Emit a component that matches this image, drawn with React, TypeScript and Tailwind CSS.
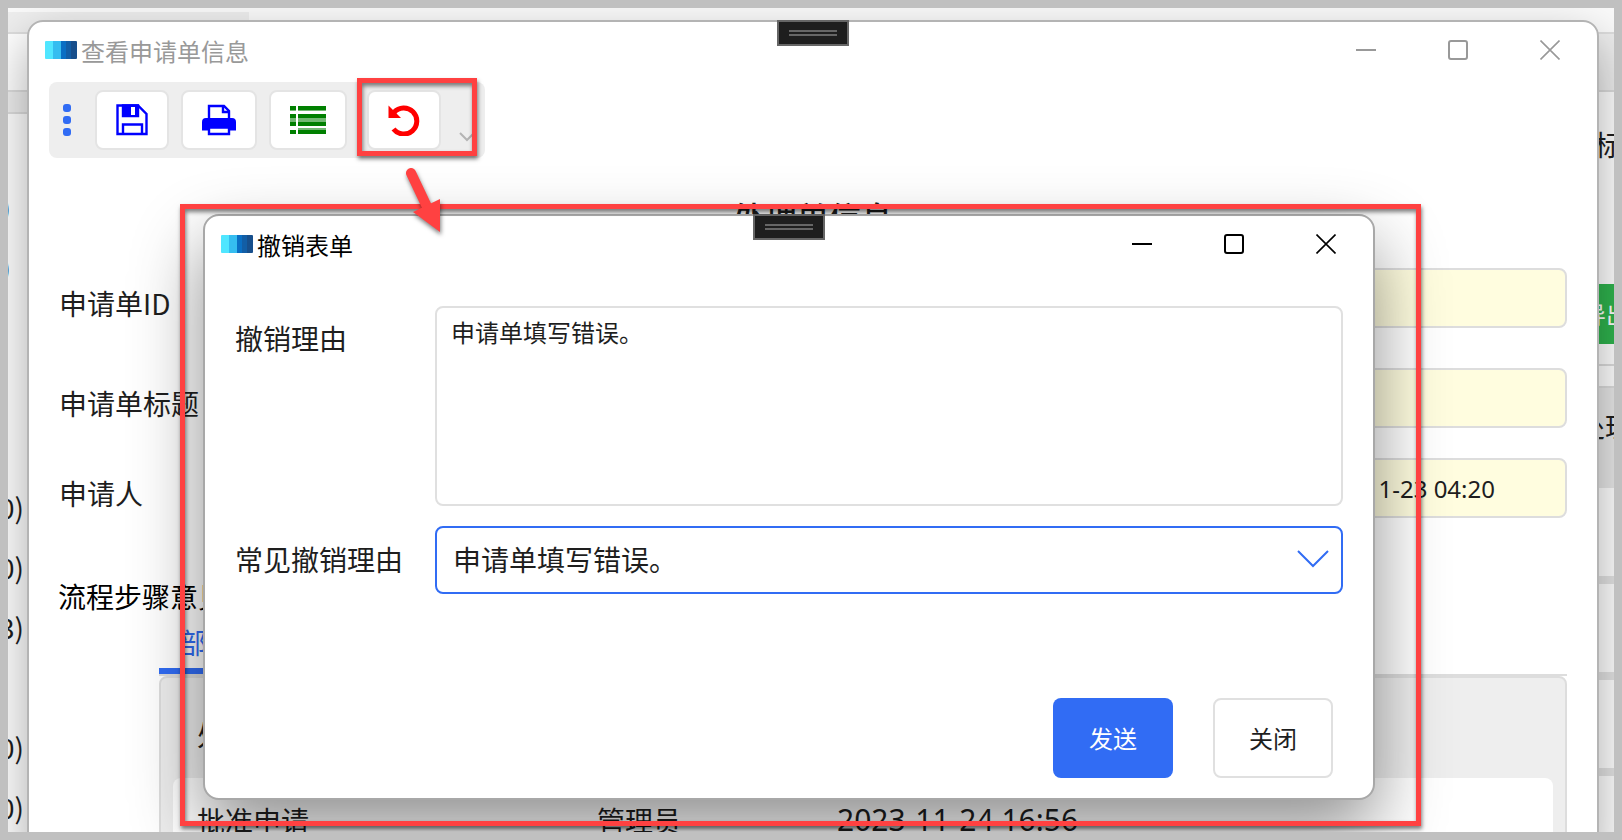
import React, { useState } from 'react'

const REASON = '申请单填写错误。'

const Logo: React.FC = () => (
  <svg width="32" height="18" viewBox="0 0 32 18" aria-hidden="true">
    <rect width="9" height="18" rx="1" fill="#50e6ff" />
    <rect x="8" width="8" height="18" fill="#35bdf0" />
    <rect x="16" width="8" height="18" fill="#0a6fc4" />
    <rect x="23" width="9" height="18" rx="1" fill="#174f8c" />
    <rect x="21" width="5" height="18" fill="#125ea6" />
  </svg>
)

const SaveIcon: React.FC = () => (
  <svg width="32" height="32" viewBox="0 0 32 32" fill="none" stroke="#0000ff" strokeWidth="2.4">
    <path d="M1.500 1.500h20.500l8.500 8.500v20h-29z" />
    <path d="M7 30V20.500h19V30" />
    <path d="M7 1.500h15v10.500H7z" fill="#0000ff" />
    <path d="M15 3h4v8h-4z" fill="#fff" stroke="none" />
  </svg>
)

const PrintIcon: React.FC = () => (
  <svg width="34" height="32" viewBox="0 0 34 32">
    <path d="M7 15V2h15l5 5v8" fill="#fff" stroke="#0000ff" strokeWidth="2.4" />
    <path d="M21 2v6h6" fill="none" stroke="#0000ff" strokeWidth="2.4" />
    <path d="M4 14h26a4 4 0 0 1 4 4v8.500h-6V23H6v3.500H0V18a4 4 0 0 1 4-4z" fill="#0000ff" />
    <path d="M7 23.500h20V30H7z" fill="#fff" stroke="#0000ff" strokeWidth="2.4" />
  </svg>
)

const ListIcon: React.FC = () => (
  <svg width="36" height="32" viewBox="0 0 36 32">
    {[2, 10, 18, 26].map((y) => (
      <g key={y} fill="#008000">
        <rect x="0" y={y} width="6" height="4" />
        <rect x="8" y={y} width="28" height="4" />
      </g>
    ))}
    <path d="M0 6h6v1H0zM8 6h28v1H8zM0 14h6v4H0zM8 14h28v4H8zM8 24h28v2H8z" fill="#008000" opacity="0.55" />
  </svg>
)

const UndoIcon: React.FC = () => (
  <svg width="32" height="32" viewBox="0 0 32 32">
    <path d="M6 8.500A13 13 0 1 1 5.500 25" fill="none" stroke="#ff0000" strokeWidth="5" />
    <path d="M0.500 1.500v12.500h12.500z" fill="#ff0000" />
  </svg>
)

const Grip: React.FC = () => (
  <div className="absolute -top-[2px] flex h-[26px] w-[72px] flex-col items-center justify-center gap-[2px] border-2 border-[#666] bg-[#1e1e1e]">
    <span className="h-[2px] w-12 bg-[#666]" />
    <span className="h-[2px] w-12 bg-[#666]" />
  </div>
)

interface TitleBarProps {
  title: string
  color: string
}

const TitleBar: React.FC<TitleBarProps> = ({ title, color }) => (
  <header className={`flex h-14 items-center pr-px pl-4 ${color}`}>
    <Logo />
    <h1 className="ml-1 flex-1 pt-[2px] text-[24px] leading-8">{title}</h1>
    <button aria-label="最小化" className="flex h-14 w-[92px] items-center justify-center">
      <svg width="20" height="20" stroke="currentColor" strokeWidth="2">
        <path d="M0 10h20" />
      </svg>
    </button>
    <button aria-label="最大化" className="flex h-14 w-[92px] items-center justify-center">
      <svg width="20" height="20" fill="none" stroke="currentColor" strokeWidth="2">
        <rect x="1" y="1" width="18" height="18" rx="2" />
      </svg>
    </button>
    <button aria-label="关闭窗口" className="flex h-14 w-[92px] items-center justify-center">
      <svg width="20" height="20" stroke="currentColor" strokeWidth="1.6">
        <path d="M0.500 0.500l19 19M19.500 0.500l-19 19" />
      </svg>
    </button>
  </header>
)

interface ToolButtonProps {
  label: string
  children: React.ReactNode
}

const ToolButton: React.FC<ToolButtonProps> = ({ label, children }) => (
  <button
    aria-label={label}
    className="flex h-[60px] items-center justify-center rounded-lg border-2 border-[#e4e4e4] bg-white px-[19px]"
  >
    {children}
  </button>
)

const Toolbar: React.FC = () => (
  <div className="relative mt-1 ml-5 flex h-[76px] w-fit items-center gap-3 rounded-lg bg-[#eee] pr-11 pl-[14px]">
    <div className="mr-3 flex flex-col gap-1">
      <span className="size-2 rounded-[3px] bg-[#316cf4]" />
      <span className="size-2 rounded-[3px] bg-[#316cf4]" />
      <span className="size-2 rounded-[3px] bg-[#316cf4]" />
    </div>
    <ToolButton label="保存">
      <SaveIcon />
    </ToolButton>
    <ToolButton label="打印">
      <PrintIcon />
    </ToolButton>
    <ToolButton label="列表">
      <ListIcon />
    </ToolButton>
    <div className="ml-2">
      <ToolButton label="撤销">
        <UndoIcon />
      </ToolButton>
    </div>
    <svg
      className="absolute right-[10px] bottom-4"
      width="16"
      height="10"
      fill="none"
      stroke="#b4b4b4"
      strokeWidth="2"
    >
      <path d="M1 1l7 7 7-7" />
    </svg>
    <div className="absolute -top-1 right-2 h-[78px] w-[120px] border-5 border-[#ff4141] shadow-[1px_3px_4px_rgba(0,0,0,0.5),inset_1px_3px_4px_rgba(0,0,0,0.5)]" />
  </div>
)

interface FieldProps {
  id: string
  label: string
  value?: string
}

const Field: React.FC<FieldProps> = ({ id, label, value = '' }) => (
  <div className="flex items-center pr-[30px] pl-[30px]">
    <label htmlFor={id} className="w-[200px] pt-[10px] text-[28px] leading-8 whitespace-nowrap">
      {label}
    </label>
    <input
      id={id}
      readOnly
      value={value}
      className="h-[60px] min-w-0 flex-1 rounded-lg border-2 border-[#ddd] bg-[#fffddf] pr-[70px] text-right font-['Noto_Sans','Noto_Sans_CJK_SC',sans-serif] text-[24px]"
    />
  </div>
)

const RequestWindow: React.FC = () => (
  <main className="absolute top-3 right-[15px] -bottom-6 left-[19px] overflow-hidden rounded-[16px] border-2 border-[#b4b4b4] bg-white">
    <TitleBar title="查看申请单信息" color="text-[#999]" />
    <Toolbar />
    <h2 className="mt-[38px] text-center text-[32px] leading-10 font-medium">处理单信息</h2>
    <div className="mt-8 flex flex-col">
      <Field id="request-id" label="申请单ID" />
      <div className="mt-10">
        <Field id="request-title" label="申请单标题" />
      </div>
      <div className="mt-[30px]">
        <Field id="applicant" label="申请人" value="2023-11-23 04:20" />
      </div>
    </div>
    <h3 className="mt-[58px] ml-[29px] text-[28px] leading-10 text-black">流程步骤意见</h3>
    <section className="mr-[30px] ml-[130px]">
      <div className="flex border-b-2 border-[#ddd]">
        <button className="h-[58px] border-b-6 border-[#316cf4] px-5 text-[28px] text-[#316cf4]">
          部门
        </button>
      </div>
      <div className="rounded-lg border-2 border-[#ddd] bg-[#eee] px-3">
        <table className="w-full table-fixed border-separate border-spacing-0 text-left text-[28px] leading-8">
          <thead>
            <tr className="h-[100px]">
              <th className="w-[400px] pt-3 pl-6 font-normal">处理步骤</th>
              <th className="w-[240px]" />
              <th />
            </tr>
          </thead>
          <tbody>
            <tr className="h-[84px]">
              <td className="rounded-l-lg bg-white pl-6">批准申请</td>
              <td className="bg-white pl-6">管理员</td>
              <td className="rounded-r-lg bg-white pl-6 font-['Noto_Sans',sans-serif] text-[30px]">
                2023-11-24 16:56
              </td>
            </tr>
          </tbody>
        </table>
      </div>
    </section>
  </main>
)

const RevokeDialog: React.FC = () => {
  const [reason, setReason] = useState(REASON)

  return (
    <div
      role="dialog"
      aria-label="撤销表单"
      className="absolute top-[206px] right-[239px] left-[195px] rounded-[16px] border-2 border-[#a8a8a8] bg-white bg-clip-padding shadow-[0_30px_70px_rgba(0,0,0,0.44)]"
    >
      <div className="flex justify-center">
        <Grip />
      </div>
      <TitleBar title="撤销表单" color="text-black" />
      <form className="mt-[34px] px-[30px]" onSubmit={(e) => e.preventDefault()}>
        <div className="flex">
          <label htmlFor="reason" className="w-[200px] pt-4 text-[28px] leading-8">
            撤销理由
          </label>
          <textarea
            id="reason"
            value={reason}
            onChange={(e) => setReason(e.target.value)}
            className="h-[200px] min-w-0 flex-1 resize-none rounded-lg border-2 border-[#e0e0e0] px-[14px] py-2 text-[24px] leading-8"
          />
        </div>
        <div className="mt-5 flex items-center">
          <label htmlFor="common-reason" className="w-[200px] pb-[2px] text-[28px] leading-8">
            常见撤销理由
          </label>
          <div className="relative min-w-0 flex-1">
            <select
              id="common-reason"
              onChange={(e) => setReason(e.target.value)}
              className="block h-[68px] w-full appearance-none rounded-lg border-2 border-[#316cf4] bg-white px-4 pb-[2px] text-[28px]"
            >
              <option>{REASON}</option>
            </select>
            <svg
              className="pointer-events-none absolute top-6 right-[14px]"
              width="32"
              height="20"
              fill="none"
              stroke="#316cf4"
              strokeWidth="2"
            >
              <path d="M1 1l15 15 15-15" />
            </svg>
          </div>
        </div>
        <div className="mt-[104px] mb-5 flex justify-end gap-10 pr-[10px]">
          <button
            type="submit"
            className="h-20 w-[120px] rounded-lg bg-[#316cf4] text-[24px] text-white"
          >
            发送
          </button>
          <button
            type="button"
            className="h-20 w-[120px] rounded-lg border-2 border-[#e0e0e0] bg-white text-[24px]"
          >
            关闭
          </button>
        </div>
      </form>
    </div>
  )
}

// the slices of the application that stay visible round the front window
const Backdrop: React.FC = () => (
  <div className="flex justify-between text-[28px] leading-[60px]">
    <div className="w-[241px]">
      <div className="h-1 bg-[#fafafa]" />
      <div className="h-5 bg-[#eee]" />
      <div className="h-[60px] border-y-2 border-[#ddd] bg-white" />
      <div className="h-[22px] border-b-2 border-[#ddd] bg-[#eee]" />
      <div className="mt-[63px] flex w-[3px] flex-col items-end">
        <span>)</span>
        <span>)</span>
      </div>
      <div className="mt-[180px] flex w-4 flex-col items-end">
        <span>(0)</span>
        <span>(0)</span>
        <span>(3)</span>
        <span className="mt-[60px]">(0)</span>
        <span>(0)</span>
      </div>
    </div>
    <div className="flex-1">
      <div className="h-6 bg-[#fafafa]" />
    </div>
    <div className="w-10 whitespace-nowrap">
      <div className="h-6 bg-[#fafafa]" />
      <div className="h-[60px] border-y-2 border-[#ddd] bg-[#eee]" />
      <div className="flex h-[192px] pt-[22px] pl-5">标题</div>
      <div className="h-[60px] bg-[#2fb44e] pl-2 text-[24px] text-white">导出</div>
      <div className="mt-5 h-6 border-y-2 border-[#ddd] bg-white" />
      <div className="h-[100px] bg-[#e8e8e8] pt-2 pl-[3px]">处理</div>
      <div className="h-24 border-b-8 border-[#e4e4e4]" />
      <div className="h-24 border-b-8 border-[#e4e4e4]" />
      <div className="h-24 border-b-8 border-[#e4e4e4]" />
      <div className="h-14" />
    </div>
  </div>
)

const App: React.FC = () => (
  <div className="relative h-screen overflow-hidden border-8 border-[#c0c0c0] bg-white font-['Noto_Sans_CJK_SC',sans-serif] text-[#1e1e1e]">
    <Backdrop />
    <div className="absolute top-3 right-[15px] -bottom-6 left-[19px] rounded-[16px] shadow-[0_20px_50px_rgba(0,0,0,0.34)]" />
    <RequestWindow />
    <div className="absolute top-[14px] right-[15px] left-[19px] flex justify-center">
      <Grip />
    </div>
    <RevokeDialog />
    <div className="pointer-events-none absolute top-[196px] right-[193px] bottom-[6px] left-[172px] border-5 border-[#ff4141] shadow-[1px_3px_4px_rgba(0,0,0,0.5),inset_1px_3px_4px_rgba(0,0,0,0.5)]" />
    <svg
      className="absolute top-[156px] left-[392px] drop-shadow-[1px_3px_2px_rgba(0,0,0,0.5)]"
      width="48"
      height="76"
    >
      <path d="M11 9l18 38" stroke="#ff4141" strokeWidth="10" strokeLinecap="round" />
      <path d="M13 48l27-13v33z" fill="#ff4141" />
    </svg>
  </div>
)

export default App
